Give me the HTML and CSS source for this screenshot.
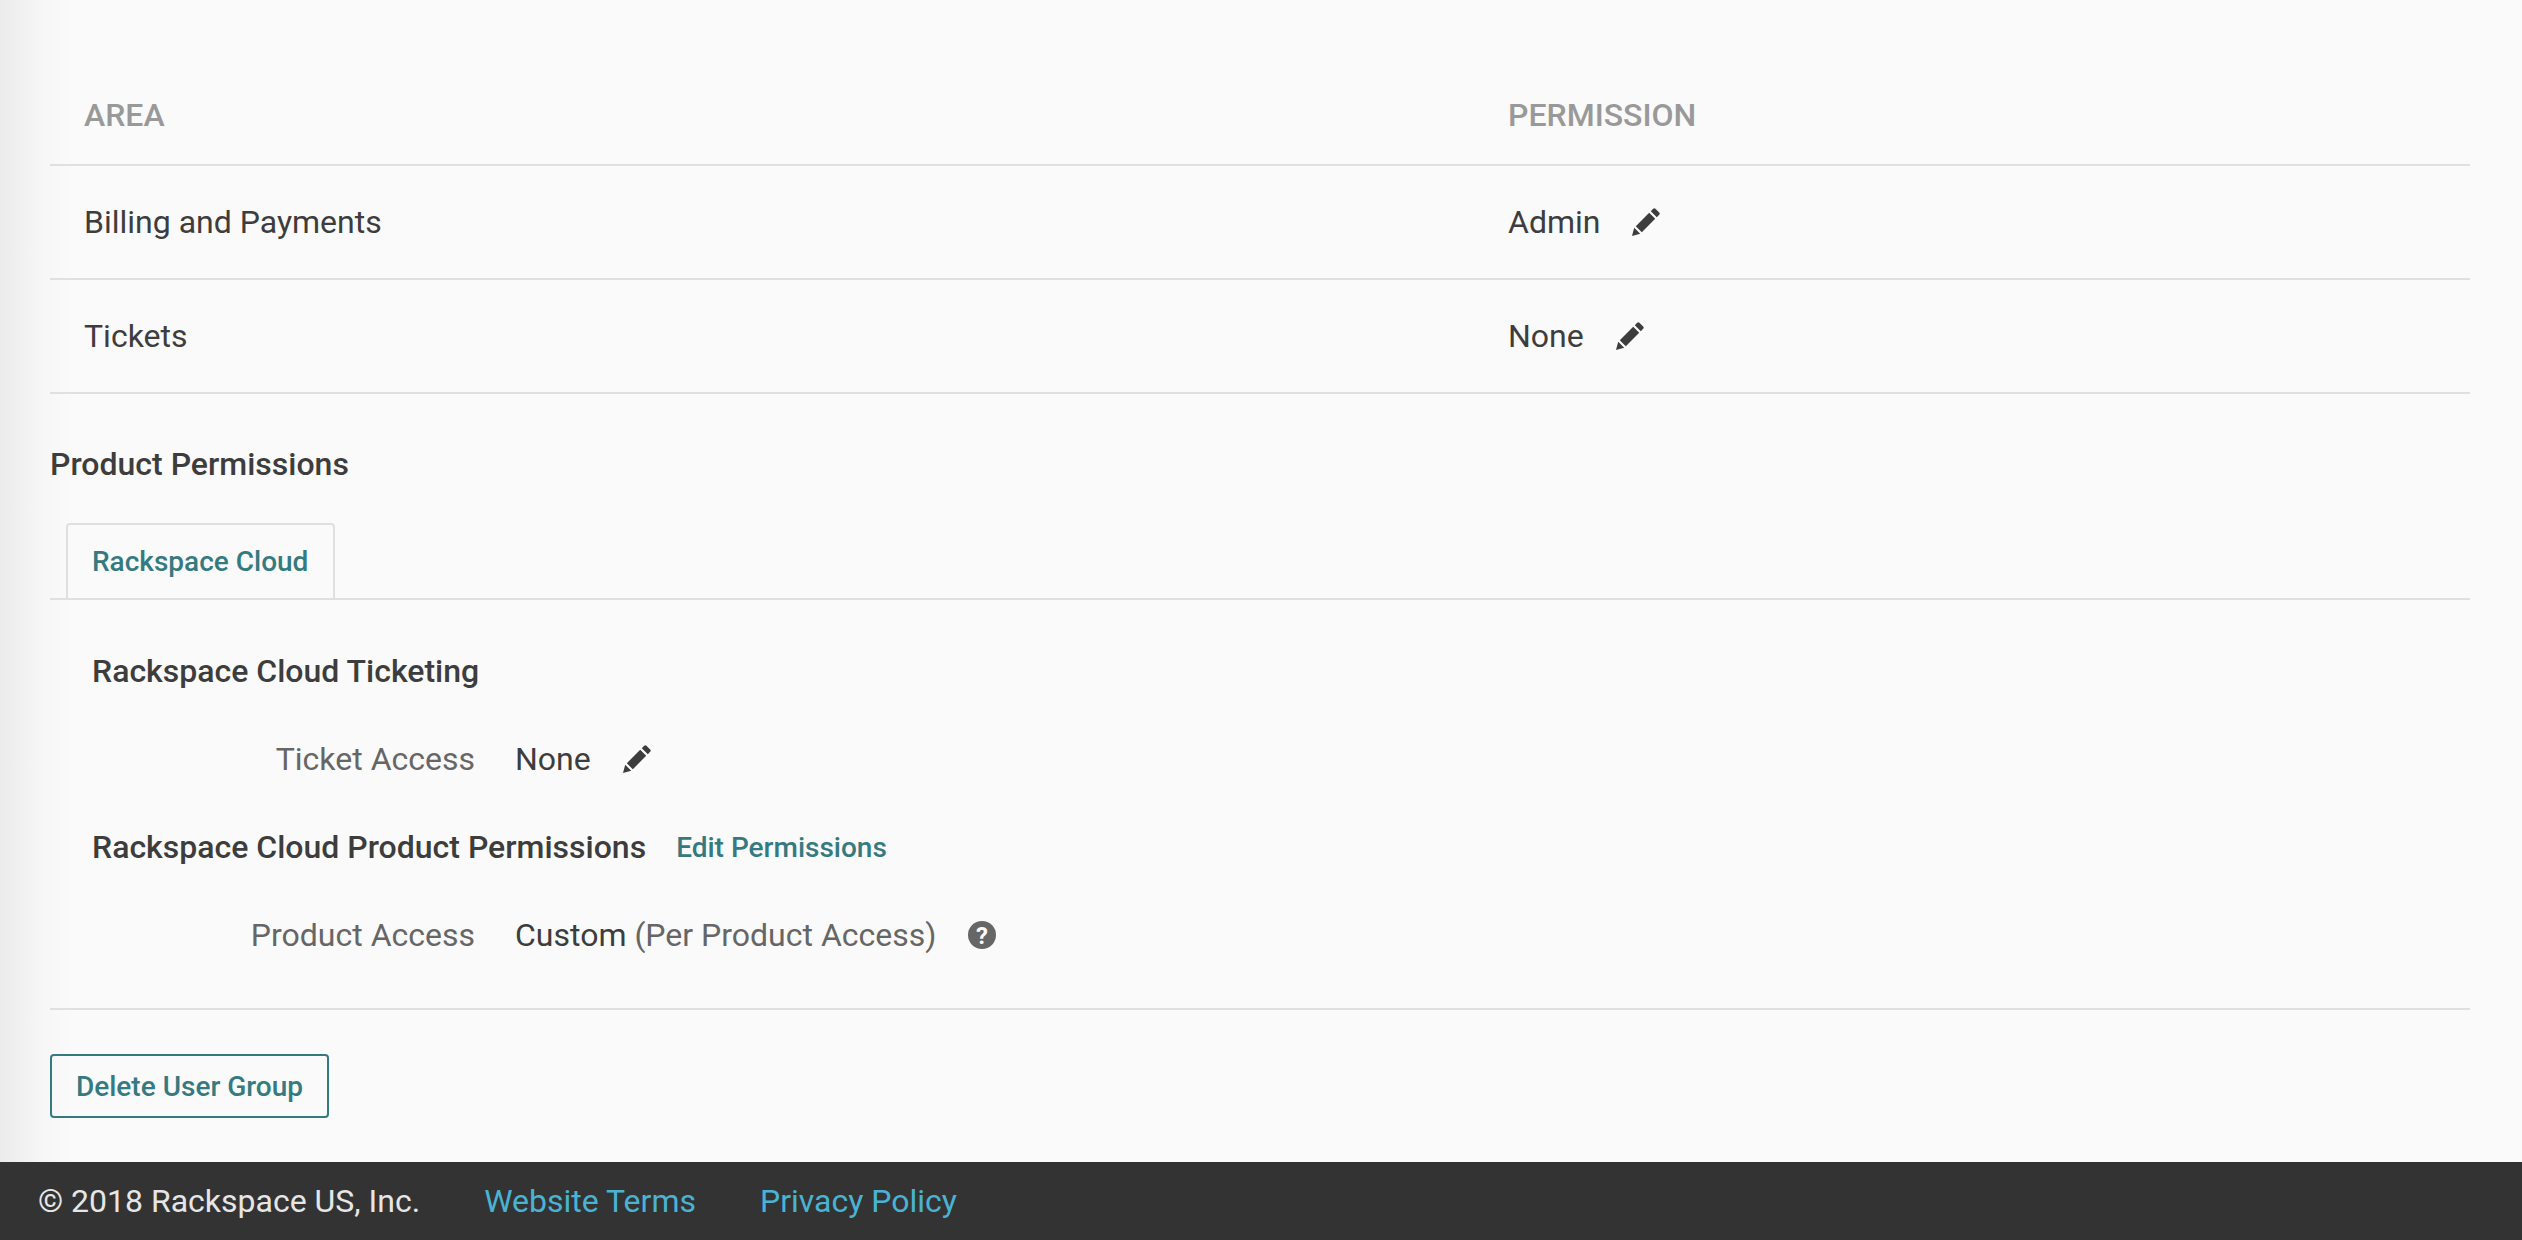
FILE: index.html
```html
<!DOCTYPE html>
<html>
<head>
<meta charset="utf-8" />
<title>User Group</title>
<link rel="stylesheet" href="styles.css">
</head>
<body>

<div class="page">
<table class="areas">
<tr>
	<th class="col-area">Area</th>
	<th>Permission</th>
</tr>
<tr>
	<td>Billing and Payments</td>
	<td>Admin<svg class="pencil" viewBox="0 0 28 28"><path d="M0 28l2.2-8.2 6 6zM3.800 18.200L17.200 4.800l6 6L9.800 24.200zM18.800 3.200l2.400-2.400a1.600 1.600 0 0 1 2.200 0l3.800 3.800a1.600 1.600 0 0 1 0 2.200l-2.400 2.400z"/></svg></td>
</tr>
<tr>
	<td>Tickets</td>
	<td>None<svg class="pencil" viewBox="0 0 28 28"><path d="M0 28l2.2-8.2 6 6zM3.800 18.200L17.200 4.800l6 6L9.800 24.200zM18.800 3.200l2.400-2.400a1.600 1.600 0 0 1 2.200 0l3.800 3.800a1.600 1.600 0 0 1 0 2.200l-2.400 2.400z"/></svg></td>
</tr>
</table>

<h2 class="section-title">Product Permissions</h2>

<div class="tabs">
	<a class="tab">Rackspace Cloud</a>
</div>

<div class="tab-body">
	<div class="sub-head"><h3>Rackspace Cloud Ticketing</h3></div>
	<div class="field">
		<span class="field-label">Ticket Access</span>
		<span class="field-value">None</span>
		<svg class="pencil" viewBox="0 0 28 28"><path d="M0 28l2.2-8.2 6 6zM3.800 18.200L17.200 4.800l6 6L9.800 24.200zM18.800 3.200l2.400-2.400a1.600 1.600 0 0 1 2.200 0l3.800 3.800a1.600 1.600 0 0 1 0 2.200l-2.400 2.400z"/></svg>
	</div>
	<div class="sub-head">
		<h3>Rackspace Cloud Product Permissions</h3>
		<a class="edit-link">Edit Permissions</a>
	</div>
	<div class="field">
		<span class="field-label">Product Access</span>
		<span class="field-value">Custom <span class="muted">(Per Product Access)</span></span>
		<svg class="help" viewBox="0 0 28 28"><circle cx="14" cy="14" r="14"/><text x="14" y="22.500" text-anchor="middle" class="help-mark">?</text></svg>
	</div>
</div>

<div class="actions">
	<button class="btn-delete">Delete User Group</button>
</div>
</div>

<div class="footer">
	<span>© 2018 Rackspace US, Inc.</span>
	<a>Website Terms</a>
	<a>Privacy Policy</a>
</div>

</body>
</html>
```

FILE: styles.css
```css
html, body{ margin:0; padding:0; }
body{ height:1240px; overflow:hidden; display:flex; flex-direction:column; font-family:Roboto, "Liberation Sans", sans-serif; font-size:32px; color:#3d3d3d; background:#fafafa; }

.page{ flex:1; padding:0 52px 0 50px; background:linear-gradient(to right, #ebebeb 0, #f6f6f6 40px, #fafafa 72px); }

.areas{ width:100%; border-collapse:collapse; table-layout:fixed; }
.areas th{ height:165px; padding:65px 0 0 34px; box-sizing:border-box; text-align:left; font-size:32px; font-weight:500; color:#999; text-transform:uppercase; border-bottom:2px solid #e0e0e0; }
.areas td{ height:114px; padding:0 0 0 34px; box-sizing:border-box; border-bottom:2px solid #e0e0e0; }
.col-area{ width:1424px; }

.pencil{ width:28px; height:28px; fill:#3d3d3d; margin-left:32px; vertical-align:-3px; }

.section-title{ margin:0; padding-top:51px; font-size:32px; line-height:38px; font-weight:500; }

.tabs{ margin-top:40px; height:75px; padding-left:16px; border-bottom:2px solid #e0e0e0; }
.tab{ display:block; width:269px; box-sizing:border-box; height:75px; padding-left:24px; line-height:73px; font-size:28px; font-weight:500; color:#357a80; border:2px solid #e0e0e0; border-bottom:0; border-radius:4px 4px 0 0; }

.tab-body{ padding:52px 0 4px 42px; border-bottom:2px solid #e0e0e0; }
.sub-head{ display:flex; align-items:center; height:38px; gap:30px; }
.sub-head h3{ margin:0; font-size:32px; font-weight:500; }
.edit-link{ font-size:28px; font-weight:500; color:#357a80; }

.field{ display:flex; align-items:center; height:38px; margin:50px 0; }
.field-label{ width:383px; margin-right:40px; text-align:right; color:#666; }
.muted{ color:#666; }
.help{ width:28px; height:28px; margin-left:32px; fill:#666; }
.help-mark{ font-family:Roboto, sans-serif; font-size:24px; font-weight:700; fill:#fafafa; }

.actions{ padding-top:44px; }
.btn-delete{ width:279px; height:64px; padding:0; font-family:inherit; font-size:28px; font-weight:500; color:#357a80; background:transparent; border:2px solid #357a80; border-radius:4px; }

.footer{ height:78px; display:flex; align-items:center; gap:64px; padding-left:38px; background:#333; color:#e6e6e6; }
.footer a{ color:#4ab3d4; }
```
